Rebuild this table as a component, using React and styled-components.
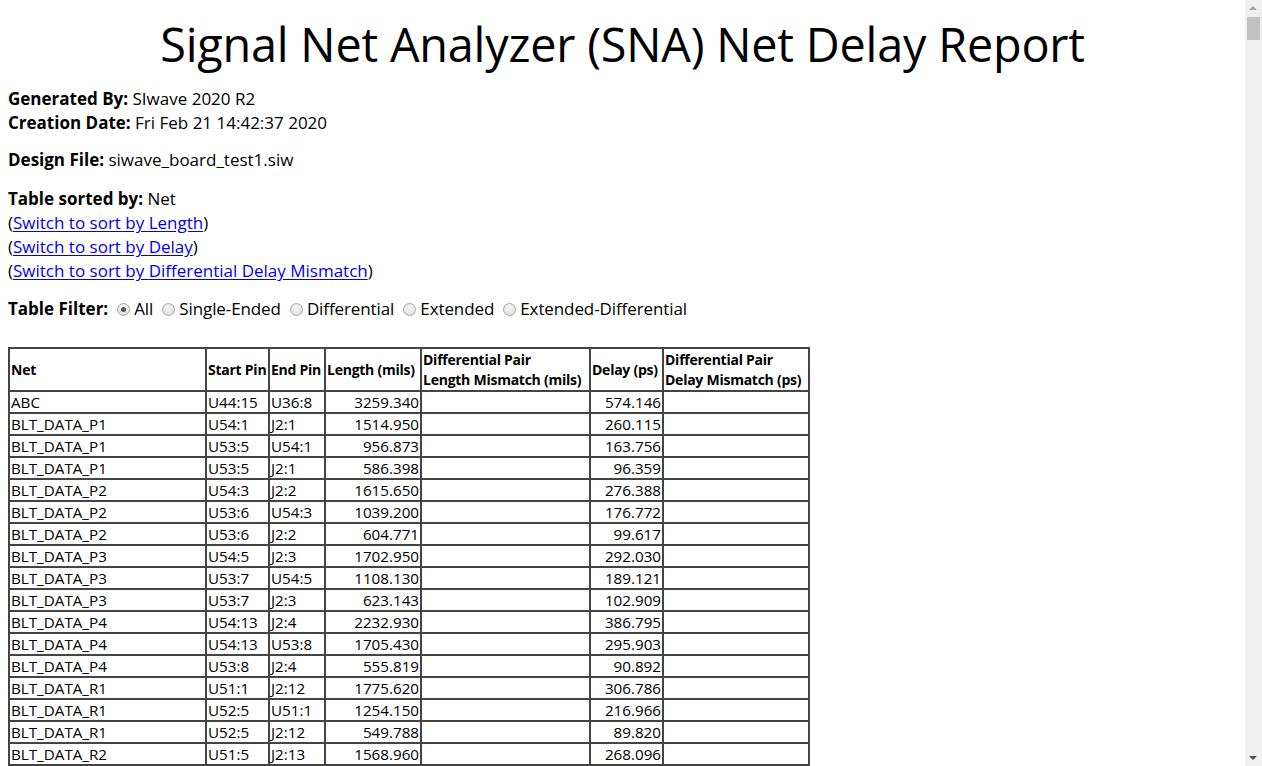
import React from "react";
import styled, { createGlobalStyle } from "styled-components";

const Global = createGlobalStyle`
  html, body { margin: 0; padding: 0; background: #fff; overflow: hidden; }
  body {
    height: 766px;
    font-family: "Open Sans", "Noto Sans", "DejaVu Sans", sans-serif;
    color: #000;
  }
`;

const Page = styled.div`
  margin: 0 25px 0 8px;
  padding-top: 8px;
`;

const Title = styled.h1`
  margin: 8px 0 0;
  font-size: 46.8px;
  line-height: 56px;
  font-weight: 400;
  text-align: center;
  letter-spacing: -0.2px;
`;

const Block = styled.div`
  margin-top: ${(p) => p.$mt}px;
  font-size: 17px;
  line-height: 24px;
`;

const Line = styled.div`
  white-space: nowrap;
`;

const Label = styled.b`
  font-weight: 700;
`;

const Link = styled.a`
  color: #0000ee;
  text-decoration: underline;
  text-underline-offset: 2px;
  cursor: pointer;
`;

const FilterRow = styled.div`
  display: flex;
  align-items: center;
  margin-top: 14px;
  font-size: 17px;
  line-height: 24px;
  white-space: nowrap;
`;

const FilterLabel = styled.b`
  font-weight: 700;
  margin-right: 9px;
`;

const Option = styled.label`
  display: inline-flex;
  align-items: center;
  margin-right: 9px;
  letter-spacing: -0.1px;
`;

const Radio = styled.span`
  position: relative;
  width: 11px;
  height: 11px;
  border-radius: 50%;
  border: 1px solid #a6a6a6;
  background: radial-gradient(circle at 50% 35%, #f4f4f4 0%, #dcdcdc 100%);
  margin-right: 4px;
  flex: none;
  &::after {
    content: "";
    display: ${(p) => (p.$checked ? "block" : "none")};
    position: absolute;
    left: 3px;
    top: 3px;
    width: 5px;
    height: 5px;
    border-radius: 50%;
    background: #555;
  }
`;

const Table = styled.table`
  margin-top: 26px;
  border-collapse: collapse;
  table-layout: fixed;
  width: 800px;
  font-size: 15.2px;
  border: 2px solid #444;
`;

const Col = styled.col`
  width: ${(p) => p.$w}px;
`;

const Th = styled.th`
  border: 2px solid #444;
  padding: 0 1px;
  font-weight: 700;
  text-align: left;
  vertical-align: middle;
  line-height: 20px;
  height: 41px;
  white-space: nowrap;
  overflow: hidden;
  font-size: 14px;
  letter-spacing: -0.25px;
`;

const Td = styled.td`
  border: 2px solid #444;
  padding: 0 1px;
  line-height: 20px;
  height: 20px;
  text-align: ${(p) => (p.$num ? "right" : "left")};
  white-space: nowrap;
  overflow: hidden;
`;

const ScrollBar = styled.div`
  position: fixed;
  top: 0;
  right: 0;
  width: 17px;
  height: 766px;
  background: #f0f0f0;
`;

const Thumb = styled.div`
  position: absolute;
  left: 2px;
  top: 17px;
  width: 13px;
  height: 23px;
  background: #c1c1c1;
`;

const Arrow = styled.div`
  position: absolute;
  left: 4px;
  width: 0;
  height: 0;
  border-left: 4px solid transparent;
  border-right: 4px solid transparent;
  ${(p) =>
    p.$down
      ? "bottom: 6px; border-top: 4px solid #505050;"
      : "top: 6px; border-bottom: 4px solid #a3a3a3;"}
`;

const rows = [
  ["ABC", "U44:15", "U36:8", "3259.340", "574.146"],
  ["BLT_DATA_P1", "U54:1", "J2:1", "1514.950", "260.115"],
  ["BLT_DATA_P1", "U53:5", "U54:1", "956.873", "163.756"],
  ["BLT_DATA_P1", "U53:5", "J2:1", "586.398", "96.359"],
  ["BLT_DATA_P2", "U54:3", "J2:2", "1615.650", "276.388"],
  ["BLT_DATA_P2", "U53:6", "U54:3", "1039.200", "176.772"],
  ["BLT_DATA_P2", "U53:6", "J2:2", "604.771", "99.617"],
  ["BLT_DATA_P3", "U54:5", "J2:3", "1702.950", "292.030"],
  ["BLT_DATA_P3", "U53:7", "U54:5", "1108.130", "189.121"],
  ["BLT_DATA_P3", "U53:7", "J2:3", "623.143", "102.909"],
  ["BLT_DATA_P4", "U54:13", "J2:4", "2232.930", "386.795"],
  ["BLT_DATA_P4", "U54:13", "U53:8", "1705.430", "295.903"],
  ["BLT_DATA_P4", "U53:8", "J2:4", "555.819", "90.892"],
  ["BLT_DATA_R1", "U51:1", "J2:12", "1775.620", "306.786"],
  ["BLT_DATA_R1", "U52:5", "U51:1", "1254.150", "216.966"],
  ["BLT_DATA_R1", "U52:5", "J2:12", "549.788", "89.820"],
  ["BLT_DATA_R2", "U51:5", "J2:13", "1568.960", "268.096"],
];

const filters = ["All", "Single-Ended", "Differential", "Extended", "Extended-Differential"];

export default function App() {
  return (
    <>
      <Global />
      <Page>
        <Title>Signal Net Analyzer (SNA) Net Delay Report</Title>
        <Block $mt={15}>
          <Line>
            <Label>Generated By:</Label> SIwave 2020 R2
          </Line>
          <Line>
            <Label>Creation Date:</Label> Fri Feb 21 14:42:37 2020
          </Line>
        </Block>
        <Block $mt={13}>
          <Line>
            <Label>Design File:</Label> siwave_board_test1.siw
          </Line>
        </Block>
        <Block $mt={15}>
          <Line>
            <Label>Table sorted by:</Label> Net
          </Line>
          <Line>
            (<Link>Switch to sort by Length</Link>)
          </Line>
          <Line>
            (<Link>Switch to sort by Delay</Link>)
          </Line>
          <Line>
            (<Link>Switch to sort by Differential Delay Mismatch</Link>)
          </Line>
        </Block>
        <FilterRow>
          <FilterLabel>Table Filter:</FilterLabel>
          {filters.map((f, i) => (
            <Option key={f}>
              <Radio $checked={i === 0} />
              {f}
            </Option>
          ))}
        </FilterRow>
        <Table>
          <colgroup>
            <Col $w={197} />
            <Col $w={63} />
            <Col $w={56} />
            <Col $w={96} />
            <Col $w={169} />
            <Col $w={73} />
            <Col $w={146} />
          </colgroup>
          <thead>
            <tr>
              <Th>Net</Th>
              <Th>Start Pin</Th>
              <Th>End Pin</Th>
              <Th>Length (mils)</Th>
              <Th>
                Differential Pair
                <br />
                Length Mismatch (mils)
              </Th>
              <Th>Delay (ps)</Th>
              <Th>
                Differential Pair
                <br />
                Delay Mismatch (ps)
              </Th>
            </tr>
          </thead>
          <tbody>
            {rows.map((r, i) => (
              <tr key={i}>
                <Td>{r[0]}</Td>
                <Td>{r[1]}</Td>
                <Td>{r[2]}</Td>
                <Td $num>{r[3]}</Td>
                <Td />
                <Td $num>{r[4]}</Td>
                <Td />
              </tr>
            ))}
          </tbody>
        </Table>
      </Page>
      <ScrollBar>
        <Arrow />
        <Thumb />
        <Arrow $down />
      </ScrollBar>
    </>
  );
}
